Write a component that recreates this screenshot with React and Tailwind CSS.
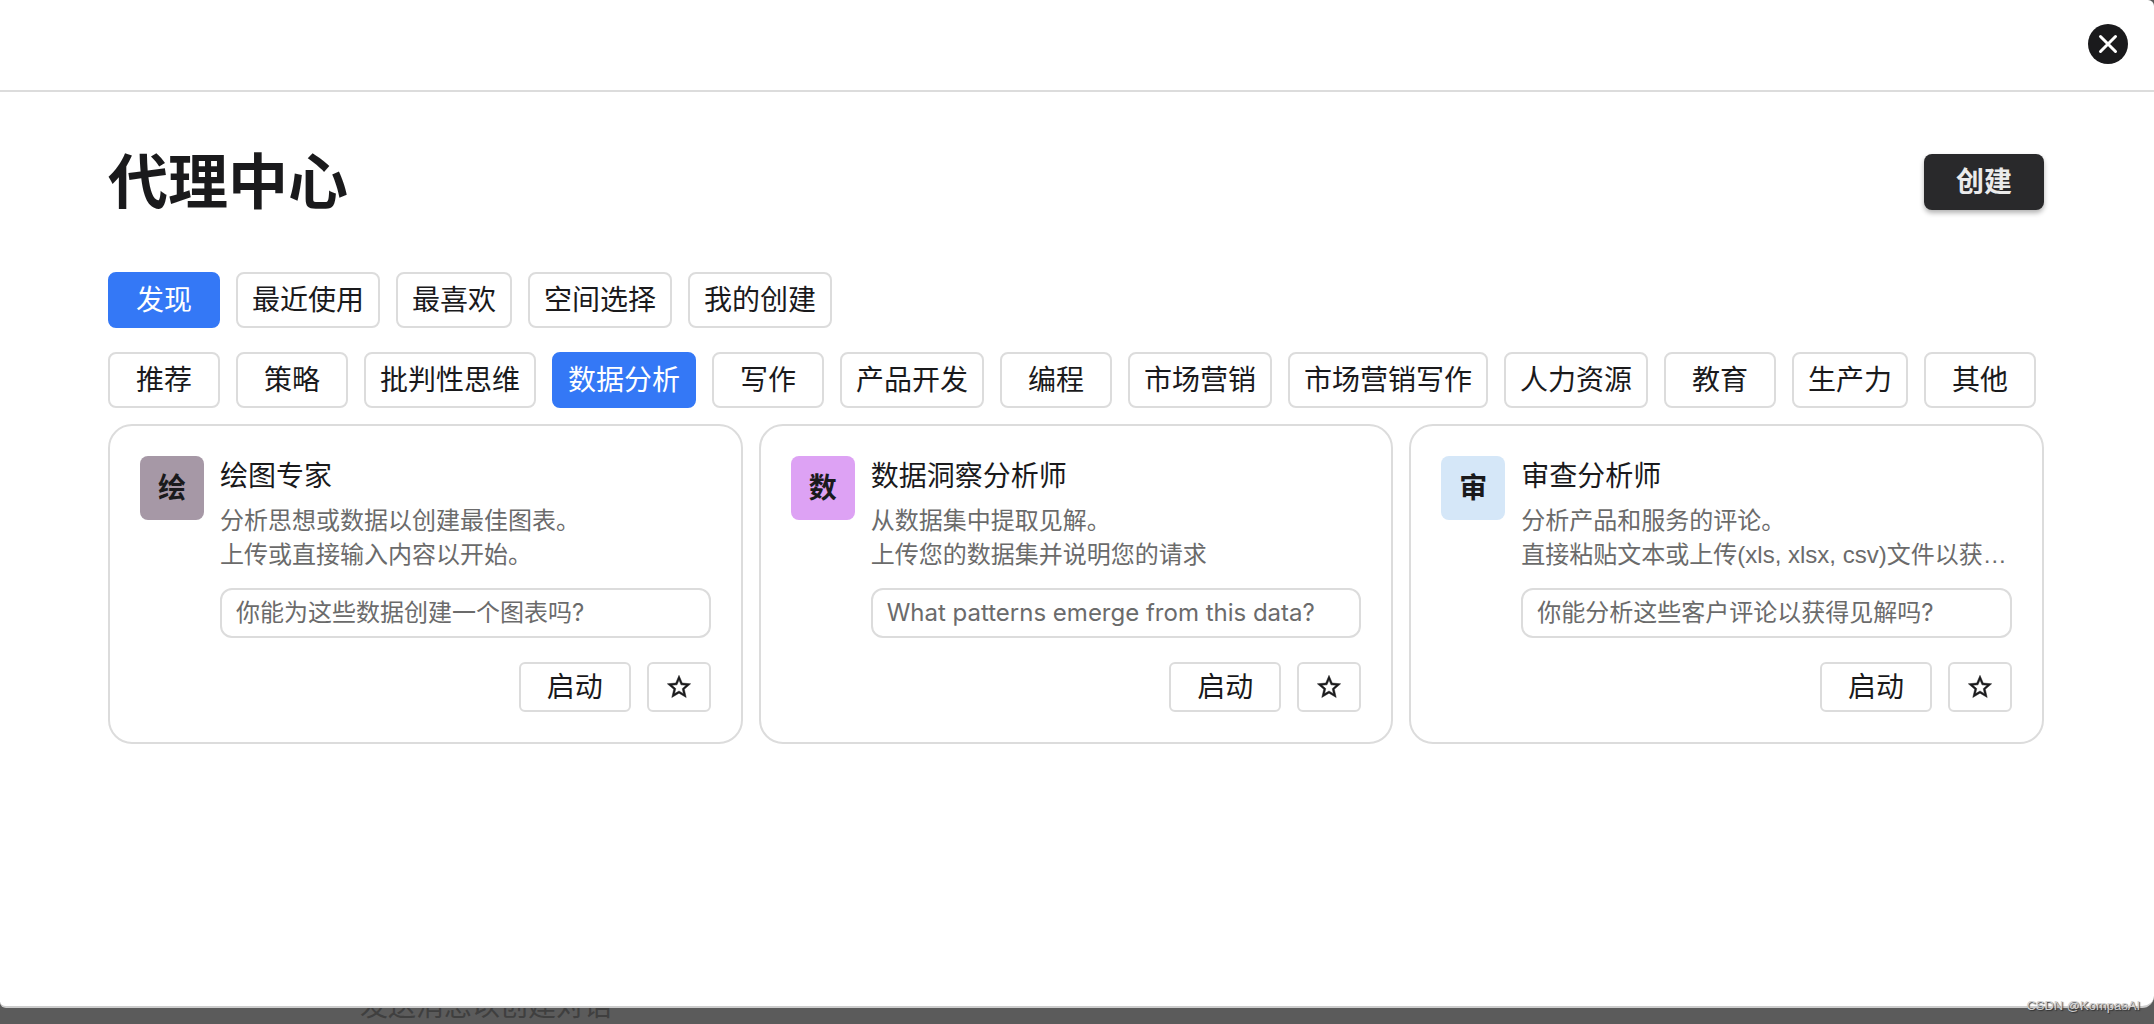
import React, { useState } from 'react';

const tabs = ['发现', '最近使用', '最喜欢', '空间选择', '我的创建'];

const categories = [
  '推荐', '策略', '批判性思维', '数据分析', '写作', '产品开发', '编程',
  '市场营销', '市场营销写作', '人力资源', '教育', '生产力', '其他',
];

const agents = [
  {
    id: 1,
    name: '绘图专家',
    initial: '绘',
    color: 'bg-[#a698a6]',
    lines: ['分析思想或数据以创建最佳图表。', '上传或直接输入内容以开始。'],
    prompt: '你能为这些数据创建一个图表吗?',
  },
  {
    id: 2,
    name: '数据洞察分析师',
    initial: '数',
    color: 'bg-[#dda2f4]',
    lines: ['从数据集中提取见解。', '上传您的数据集并说明您的请求'],
    prompt: 'What patterns emerge from this data?',
  },
  {
    id: 3,
    name: '审查分析师',
    initial: '审',
    color: 'bg-[#d5e7f8]',
    lines: ['分析产品和服务的评论。', '直接粘贴文本或上传(xls, xlsx, csv)文件以获…'],
    prompt: '你能分析这些客户评论以获得见解吗?',
  },
];

function TabButton({ label, active, onClick }) {
  return (
    <button
      type="button"
      onClick={onClick}
      className={`h-14 min-w-28 px-3.5 rounded-lg border-2 text-[28px] leading-9 whitespace-nowrap ${
        active ? 'bg-[#3478f6] border-[#3478f6] text-white' : 'bg-white border-[#dcdcdc] text-[#1a1a1c]'
      }`}
    >
      {label}
    </button>
  );
}

function AgentCard({ agent }) {
  const [starred, setStarred] = useState(false);

  return (
    <article className="flex gap-4 min-w-0 p-[30px] border-2 border-[#dcdcdc] rounded-3xl">
      <div className={`flex items-center justify-center shrink-0 w-16 h-16 rounded-lg text-[28px] font-bold ${agent.color}`}>
        {agent.initial}
      </div>
      <div className="flex-1 min-w-0">
        <h2 className="text-[28px] leading-10 truncate">{agent.name}</h2>
        <div className="mt-2 text-2xl leading-[34px] text-[#6b6b6b] font-['Liberation_Sans','Noto_Sans_CJK_SC',sans-serif]">
          {agent.lines.map((line) => (
            <p key={line} className="truncate">{line}</p>
          ))}
        </div>
        <button
          type="button"
          className="block w-full h-[50px] mt-4 px-3.5 border-2 border-[#dcdcdc] rounded-xl text-left text-2xl text-[#6b6b6b] truncate"
        >
          {agent.prompt}
        </button>
        <div className="flex justify-end gap-4 mt-6">
          <button type="button" className="w-28 h-[50px] border-2 border-[#dcdcdc] rounded-md text-[28px] leading-9">
            启动
          </button>
          <button
            type="button"
            aria-label="收藏"
            aria-pressed={starred}
            onClick={() => setStarred(!starred)}
            className="flex items-center justify-center w-16 h-[50px] border-2 border-[#dcdcdc] rounded-md"
          >
            <svg className="w-7 h-7" viewBox="0 0 24 24" fill="currentColor" stroke="currentColor" strokeWidth="0.4">
              <path d="M22 9.24l-7.19-.62L12 2 9.19 8.63 2 9.24l5.46 4.73L5.82 21 12 17.27 18.18 21l-1.63-7.03L22 9.24zM12 15.4l-3.76 2.27 1-4.28-3.32-2.88 4.38-.38L12 6.1l1.71 4.04 4.38.38-3.32 2.88 1 4.28L12 15.4z" />
              {starred && <path d="M12 4l2 5.5 6 .5-4.5 4 1.5 6-5-3-5 3 1.5-6L4 10l6-.5z" />}
            </svg>
          </button>
        </div>
      </div>
    </article>
  );
}

export default function App() {
  const [tab, setTab] = useState('发现');
  const [category, setCategory] = useState('数据分析');

  return (
    <div className="relative flex flex-col min-h-screen bg-[#5b5b5b] text-[#1a1a1c] font-[Inter,'Noto_Sans_CJK_SC',sans-serif]">
      <main className="flex-1 bg-white border-b-2 border-[#cccccc] rounded-tr-md rounded-bl-md rounded-br-xl">
        <header className="flex items-center justify-end h-[92px] px-[26px] pb-0.5 border-b-2 border-[#dcdcdc]">
          <button
            type="button"
            aria-label="关闭"
            className="flex items-center justify-center w-10 h-10 rounded-full bg-[#1a1a1c] text-white"
          >
            <svg className="w-5 h-5" viewBox="0 0 20 20" fill="none" stroke="currentColor" strokeWidth="3" strokeLinecap="round">
              <path d="M2.5 2.5l15 15M17.5 2.5l-15 15" />
            </svg>
          </button>
        </header>

        <div className="pl-[108px] pr-[110px] pt-[46px]">
          <div className="flex items-center justify-between">
            <h1 className="text-6xl leading-[88px] font-bold">代理中心</h1>
            <button
              type="button"
              className="w-[120px] h-14 rounded-lg bg-[#29292b] text-[28px] leading-9 font-bold text-[#ebebeb] shadow-[0_3px_5px_rgba(0,0,0,0.3)]"
            >
              创建
            </button>
          </div>

          <nav className="flex flex-wrap gap-4 mt-[46px]">
            {tabs.map((t) => (
              <TabButton key={t} label={t} active={t === tab} onClick={() => setTab(t)} />
            ))}
          </nav>
          <nav className="flex flex-wrap gap-4 mt-6">
            {categories.map((c) => (
              <TabButton key={c} label={c} active={c === category} onClick={() => setCategory(c)} />
            ))}
          </nav>

          <section className="grid grid-cols-3 gap-4 mt-4">
            {agents.map((agent) => (
              <AgentCard key={agent.id} agent={agent} />
            ))}
          </section>
        </div>
      </main>

      {/* dimmed chat page that shows below the dialog */}
      <footer className="flex items-end h-4 pl-[360px] pb-0.5 overflow-hidden">
        <p className="text-[28px] leading-8 text-[#3f3f3f] whitespace-nowrap">发送消息以创建对话</p>
      </footer>
      <span className="absolute right-3.5 bottom-2 text-[13px] leading-5 text-[#d0d0d0] [text-shadow:1px_1px_1px_#333] font-['Liberation_Sans',sans-serif]">
        CSDN @KompasAI
      </span>
    </div>
  );
}
